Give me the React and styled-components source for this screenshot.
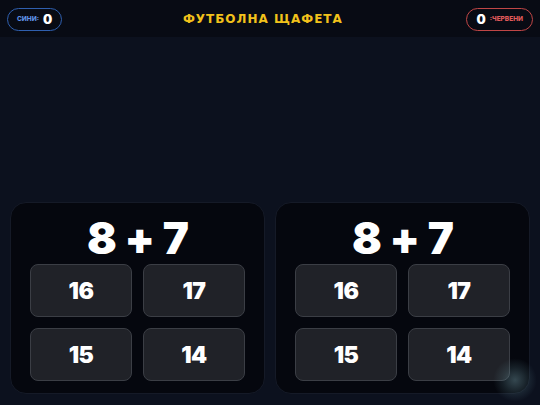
import React from 'react'
import styled, { createGlobalStyle } from 'styled-components'

const GlobalStyle = createGlobalStyle`
	html, body {
		margin:0;
		padding:0;
		background:#0c111e;
	}
	#root {
		height:100vh;
	}
	* { box-sizing:border-box; }
`

const Page = styled.div`
	height:100vh;
	display:flex;
	flex-direction:column;
	font-family:Inter, "DejaVu Sans", sans-serif;
	background:#0c111e;
	position:relative;
	overflow:hidden;
`

const Header = styled.div`
	height:37px;
	flex:none;
	background:#080b14;
	display:flex;
	align-items:center;
	justify-content:space-between;
	padding:0 7px;
`

const ScorePill = styled.div`
	height:23px;
	border:1.5px solid ${p => p.color};
	border-radius:12px;
	display:flex;
	align-items:center;
	gap:4px;
	padding:0 9px;
	margin-top:1px;
`

const TeamLabel = styled.span`
	font-size:6.5px;
	font-weight:800;
	color:${p => p.color};
	text-transform:uppercase;
`

const Score = styled.span`
	font-size:13px;
	font-weight:900;
	color:#fff;
`

const Title = styled.div`
	font-family:"DejaVu Sans", sans-serif;
	font-weight:bold;
	font-size:12px;
	letter-spacing:1px;
	color:#f2c21b;
	margin-right:3px;
`

const Arena = styled.div`
	flex:1;
	display:flex;
	align-items:flex-end;
	gap:10px;
	padding:0 10px 11px;
`

const Panel = styled.div`
	flex:1;
	height:192px;
	background:#05070e;
	border:1px solid #151a27;
	border-radius:16px;
	padding:10px 19px 13px;
	display:flex;
	flex-direction:column;
	align-items:stretch;
`

const Question = styled.div`
	text-align:center;
	color:#fff;
	font-size:44px;
	font-weight:900;
	line-height:50px;
	height:50px;
	margin-bottom:1px;
	letter-spacing:-1px;
	word-spacing:1px;
`

const Answers = styled.div`
	display:grid;
	grid-template-columns:1fr 1fr;
	gap:11px;
`

const Answer = styled.button`
	height:53px;
	background:#202228;
	border:1px solid #3b3e45;
	border-radius:8px;
	color:#fff;
	font-family:Inter, "DejaVu Sans", sans-serif;
	font-size:23px;
	font-weight:900;
	letter-spacing:-0.5px;
	display:flex;
	align-items:center;
	justify-content:center;
	cursor:pointer;
`

const Glow = styled.div`
	position:absolute;
	left:493px;
	top:358px;
	width:44px;
	height:44px;
	border-radius:50%;
	background:radial-gradient(circle, rgba(110,150,160,0.45) 0%, rgba(90,130,140,0.2) 40%, rgba(60,90,100,0) 70%);
	pointer-events:none;
`

const rounds = [
	{ q: '8 + 7', answers: [16, 17, 15, 14] },
	{ q: '8 + 7', answers: [16, 17, 15, 14] }
]

export default function App() {
	return (
		<Page>
			<GlobalStyle />
			<Header>
				<ScorePill color="#2f5fae">
					<TeamLabel color="#5d91e6">сини:</TeamLabel>
					<Score>0</Score>
				</ScorePill>
				<Title>ФУТБОЛНА ЩАФЕТА</Title>
				<ScorePill color="#c04646">
					<Score>0</Score>
					<TeamLabel color="#e05a5a">:червени</TeamLabel>
				</ScorePill>
			</Header>

			<Arena>
				{rounds.map((r, i) => (
					<Panel key={i}>
						<Question>{r.q}</Question>
						<Answers>
							{r.answers.map(a => (
								<Answer key={a}>{a}</Answer>
							))}
						</Answers>
					</Panel>
				))}
			</Arena>

			<Glow />
		</Page>
	)
}
